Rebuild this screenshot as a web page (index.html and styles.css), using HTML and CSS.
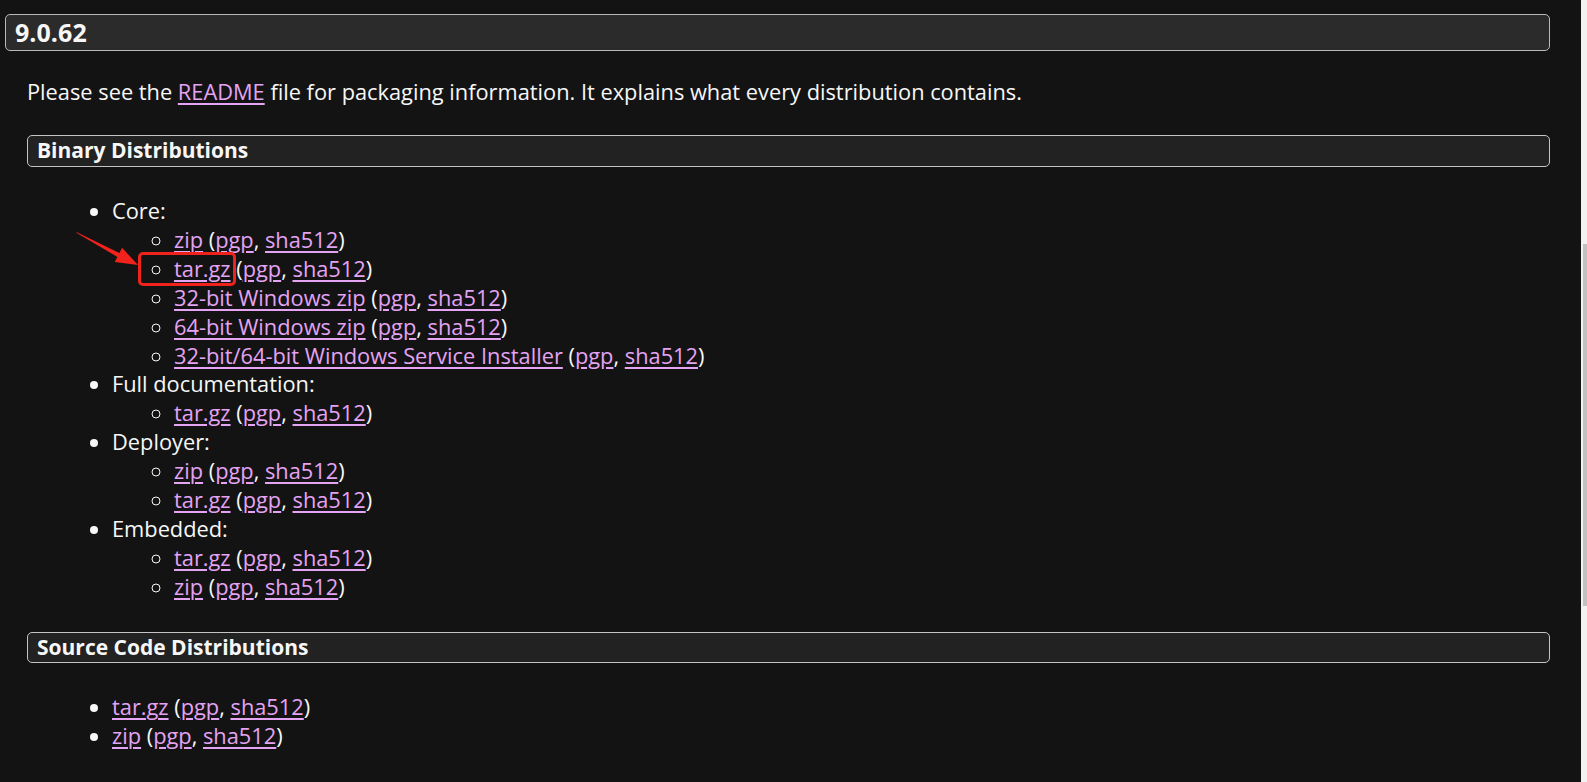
FILE: index.html
```html
<!DOCTYPE html>
<html lang="en">
<head>
<meta charset="utf-8">
<title>Tomcat 9.0.62</title>
<link rel="stylesheet" href="styles.css">
</head>
<body>
<div class="page">
  <main class="content">
    <h2 class="version">9.0.62</h2>
    <div class="section">
      <p class="intro">Please see the <a href="#">README</a> file for packaging information. It explains what every distribution contains.</p>

      <h3 class="sub">Binary Distributions</h3>
      <ul class="outer">
        <li>Core:
          <ul class="inner">
            <li><a href="#">zip</a> (<a href="#">pgp</a>, <a href="#">sha512</a>)</li>
            <li><a href="#">tar.gz</a> (<a href="#">pgp</a>, <a href="#">sha512</a>)</li>
            <li><a href="#">32-bit Windows zip</a> (<a href="#">pgp</a>, <a href="#">sha512</a>)</li>
            <li><a href="#">64-bit Windows zip</a> (<a href="#">pgp</a>, <a href="#">sha512</a>)</li>
            <li><a href="#">32-bit/64-bit Windows Service Installer</a> (<a href="#">pgp</a>, <a href="#">sha512</a>)</li>
          </ul>
        </li>
        <li>Full documentation:
          <ul class="inner">
            <li><a href="#">tar.gz</a> (<a href="#">pgp</a>, <a href="#">sha512</a>)</li>
          </ul>
        </li>
        <li>Deployer:
          <ul class="inner">
            <li><a href="#">zip</a> (<a href="#">pgp</a>, <a href="#">sha512</a>)</li>
            <li><a href="#">tar.gz</a> (<a href="#">pgp</a>, <a href="#">sha512</a>)</li>
          </ul>
        </li>
        <li>Embedded:
          <ul class="inner">
            <li><a href="#">tar.gz</a> (<a href="#">pgp</a>, <a href="#">sha512</a>)</li>
            <li><a href="#">zip</a> (<a href="#">pgp</a>, <a href="#">sha512</a>)</li>
          </ul>
        </li>
      </ul>

      <h3 class="sub">Source Code Distributions</h3>
      <ul class="outer">
        <li><a href="#">tar.gz</a> (<a href="#">pgp</a>, <a href="#">sha512</a>)</li>
        <li><a href="#">zip</a> (<a href="#">pgp</a>, <a href="#">sha512</a>)</li>
      </ul>
    </div>

    <div class="highlight"></div>
    <svg class="arrow" width="160" height="290" viewBox="0 0 160 290" xmlns="http://www.w3.org/2000/svg">
      <polygon points="76.3,232 119.4,252.9 122.1,247.8 138,265 114.7,262 117.4,256.9 76.7,233" fill="#f0231c"/>
    </svg>
  </main>
  <div class="scrollbar"><div class="thumb"></div></div>
</div>
</body>
</html>
```
FILE: styles.css
```css
html, body {
  margin: 0;
  padding: 0;
  height: 782px;
  overflow: hidden;
  background: #131313;
}

body {
  font-family: "Open Sans", "Noto Sans", "DejaVu Sans", sans-serif;
  font-size: 21.8px;
  line-height: 28.9px;
  color: #f7f7f7;
}

.page {
  display: flex;
  height: 782px;
}

.content {
  position: relative;
  flex: 1;
  padding-top: 14px;
}

.version {
  margin: 0 31px 0 5px;
  padding: 1px 9px;
  font-size: 25px;
  line-height: 32.7px;
  letter-spacing: 0.05px;
  font-weight: 700;
  background: #2b2b2b;
  border: 1px solid #b9b9b9;
  border-radius: 5px;
}

.section {
  margin: 0 31px 0 27px;
}

.intro {
  margin: 26.8px 0 0 0;
}

.sub {
  margin: 28.8px 0 0 0;
  padding: 0 9px;
  font-size: 21px;
  line-height: 29.3px;
  font-weight: 700;
  background: #222222;
  border: 1px solid #c4c4c4;
  border-radius: 5px;
}

a {
  color: #e4a3f3;
  text-decoration: underline;
  text-decoration-thickness: 2px;
  text-underline-offset: 3px;
}

.outer {
  margin: 30.5px 0 30px 0;
  padding-left: 85px;
  list-style: disc;
}

.inner {
  margin: 0;
  padding-left: 62px;
  list-style: circle;
}

.highlight {
  position: absolute;
  left: 138px;
  top: 252px;
  width: 92px;
  height: 28px;
  border: 3px solid #f0231c;
  border-radius: 5px;
}

.arrow {
  position: absolute;
  left: 0;
  top: 0;
}

.scrollbar {
  width: 6px;
  background: #f1f1f1;
  flex-shrink: 0;
}

.thumb {
  margin: 244px 0 0 2px;
  width: 4px;
  height: 362px;
  background: #c1c1c1;
}
```
